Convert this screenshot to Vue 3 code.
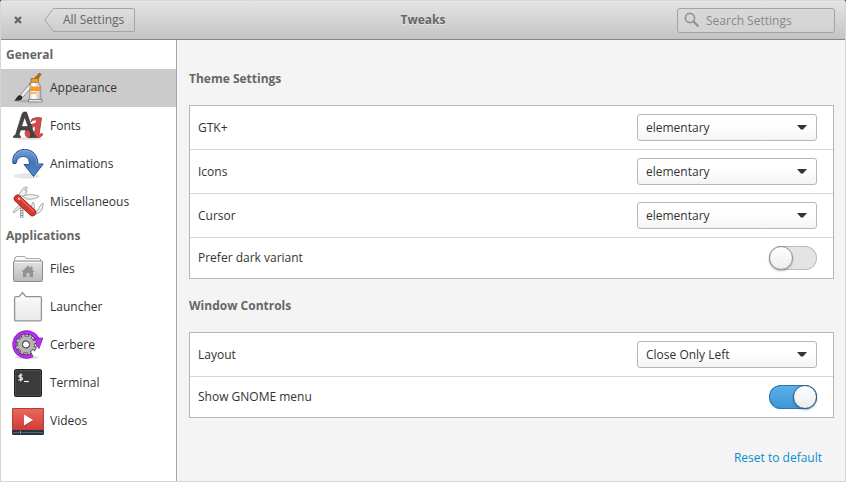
<script setup>
import { reactive, ref } from "vue";

const search = ref("")
const selected = ref("appearance")

const groups = [
  {
    title: "General",
    items: [
      { id: "appearance", label: "Appearance" },
      { id: "fonts", label: "Fonts" },
      { id: "animations", label: "Animations" },
      { id: "misc", label: "Miscellaneous" }
    ]
  },
  {
    title: "Applications",
    items: [
      { id: "files", label: "Files" },
      { id: "launcher", label: "Launcher" },
      { id: "cerbere", label: "Cerbere" },
      { id: "terminal", label: "Terminal" },
      { id: "videos", label: "Videos" }
    ]
  }
]

const defaults = {
  gtk: "elementary",
  icons: "elementary",
  cursor: "elementary",
  dark: false,
  layout: "Close Only Left",
  menu: true
}

const settings = reactive({ ...defaults })

const themes = ["elementary", "Adwaita", "HighContrast"]
const layouts = ["Close Only Left", "Close Only Right", "Minimize Left", "Windows"]

const sections = [
  {
    title: "Theme Settings",
    rows: [
      { key: "gtk", label: "GTK+", options: themes },
      { key: "icons", label: "Icons", options: themes },
      { key: "cursor", label: "Cursor", options: themes },
      { key: "dark", label: "Prefer dark variant" }
    ]
  },
  {
    title: "Window Controls",
    rows: [
      { key: "layout", label: "Layout", options: layouts },
      { key: "menu", label: "Show GNOME menu" }
    ]
  }
]

const reset = () => {
  Object.assign(settings, defaults)
}
</script>

<template>
  <div class="window">
    <header class="titlebar">
      <div class="left">
        <button class="close" aria-label="Close">
          <svg width="8" height="8" viewBox="0 0 8 8">
            <path d="M1 1 7 7M7 1 1 7" stroke="#666" stroke-width="2.3" />
          </svg>
        </button>
        <button class="back">
          <svg width="10" height="24" viewBox="0 0 10 24">
            <defs>
              <linearGradient id="tip" x1="0" y1="0" x2="0" y2="1">
                <stop offset="0" stop-color="#dedede" />
                <stop offset="1" stop-color="#cdcdcd" />
              </linearGradient>
            </defs>
            <path d="M10 .5H9.500L.8 12 9.500 23.500H10" fill="url(#tip)" stroke="#a5a5a5" />
          </svg>
          <span>All Settings</span>
        </button>
      </div>
      <h1>Tweaks</h1>
      <label class="search">
        <svg width="16" height="16" viewBox="0 0 16 16" fill="none" stroke="#929292">
          <circle cx="6" cy="6" r="4.600" stroke-width="1.600" />
          <path d="M9.400 9.400 14.500 14.500" stroke-width="2.200" />
        </svg>
        <input v-model="search" type="text" placeholder="Search Settings" aria-label="Search Settings">
      </label>
    </header>

    <div class="body">
      <nav class="sidebar">
        <template v-for="g in groups" :key="g.title">
          <h2>{{ g.title }}</h2>
          <button
            v-for="item in g.items"
            :key="item.id"
            class="item"
            :class="{ active: selected === item.id }"
            @click="selected = item.id"
          >
            <svg v-if="item.id === 'appearance'" width="32" height="32" viewBox="0 0 32 32">
              <defs>
                <linearGradient id="tube" x1="0" y1="0" x2="1" y2="0">
                  <stop offset="0" stop-color="#d8d8d8" />
                  <stop offset=".4" stop-color="#fff" />
                  <stop offset="1" stop-color="#b5b5b5" />
                </linearGradient>
              </defs>
              <ellipse cx="17" cy="29" rx="14" ry="1.500" fill="#000" opacity=".15" />
              <path d="M27.500 1 29 2.500 25 8 20 13.500 17.500 12 22 7Z" fill="#b8701c" stroke="#7e4a10" stroke-width=".8" />
              <path d="M17 12.500 20 15 10.500 25.500 8 23.500Z" fill="#eee" stroke="#777" stroke-width=".8" />
              <path d="M2 28.500C5 27.500 4.500 23 8 23.200c3 .5 3 3.800.6 4.800-2 .9-4 .8-6.600.5Z" fill="#2b2b2b" />
              <path d="M19 6.500h7.500v4H19Z" fill="#f49a22" stroke="#ad640d" stroke-width=".8" />
              <path d="M19 10.500h7.500l2 3.500.5 14H17.500l.5-14Z" fill="url(#tube)" stroke="#898989" stroke-width=".8" />
              <path d="M18.300 14.500h10v4.500H18.100Z" fill="#f59b24" />
              <path d="M18.200 20h6l.8 2h-7Z" fill="#f8bb60" />
              <path d="M16.500 27.500h13.500v2.500H16.500Z" fill="#e6e6e6" stroke="#777" stroke-width=".8" />
            </svg>

            <svg v-else-if="item.id === 'fonts'" width="32" height="32" viewBox="0 0 32 32">
              <ellipse cx="17" cy="28.500" rx="14" ry="1.500" fill="#000" opacity=".12" />
              <path
                d="M20 9q5-2.500 9.500-1l-2.300 15.500q0 1.500 3 0l.5 1.500q-3 3.500-6.500 2.500-1.500-.6-1.200-3-3.500 4-7 3-4-1.500-2.500-6.500 2-7 10.500-7.500l.4-2.500q.2-2-4-.5L19 12Zm3.500 7q-4 .5-5 4.500-.6 3.500 1.500 3.300 2-.5 3-3.300Z"
                fill="#d94a4e"
                stroke="#a52e32"
                stroke-width=".8"
              />
              <path d="M1.500 27.500V26l2-1L10 4l1.500-2h3L22.500 25l1.500 1v1.500h-6V26l1-1-1.700-5H8.500L7 25l1.500 1v1.500ZM9.500 16.500h6.600L12.700 7Z" fill="#454545" stroke="#2f2f2f" stroke-width=".6" />
            </svg>

            <svg v-else-if="item.id === 'animations'" width="32" height="32" viewBox="0 0 32 32">
              <defs>
                <linearGradient id="swoop" x1="0" y1="0" x2="0" y2="1">
                  <stop offset="0" stop-color="#749fd6" />
                  <stop offset=".5" stop-color="#4475b6" />
                  <stop offset="1" stop-color="#5486c8" />
                </linearGradient>
              </defs>
              <ellipse cx="15" cy="28" rx="13" ry="2.800" fill="#000" opacity=".1" />
              <path d="M1 15.500C-.5 7 5 1.500 12.500 1.500c8.500 0 13 5.500 13.500 14.500h5.200L21.500 28.500 12 16.500H17.500c0-5-2-8-6-8C7.500 8.500 5 11 4 15.500Z" fill="url(#swoop)" stroke="#24528f" stroke-linejoin="round" />
              <path d="M2 12C3 6 7 2.700 12.500 2.700c7.500 0 12 4.800 12.500 14.300h4" fill="none" stroke="#8db4e2" stroke-width=".6" />
            </svg>

            <svg v-else-if="item.id === 'misc'" width="32" height="32" viewBox="0 0 32 32">
              <g fill="#efefef" stroke="#949494" stroke-width=".8" stroke-linejoin="round">
                <path d="M6.500 9 11 2.500 14.500.8l.8 1.800-2.500 1.400L15 5l-2.500 6Z" />
                <path d="M11 10c5-2 12-2 16 .5-3 2.700-9 3-13 2.500Z" />
                <path d="M7 19 1 26l1 .8L9 21Z" />
                <path d="M8.500 19.500h2.500V32H8.500Z" />
                <path d="M19 24c1-4 .5-6 2-8l1 2c1 3 0 6-1 8Z" />
                <path d="M23 26c4-1 3-4 5-6l2.500-3 .8.700-1 5c-1 3-4 4.500-6 5Z" />
              </g>
              <path d="M8.500 22h2.500M8.500 24.500h2.500M8.500 27h2.500M8.500 29.500h2.500" stroke="#8a8a8a" />
              <path d="M5.500 12.500 20.500 26.500" stroke="#a01c17" stroke-width="7.400" stroke-linecap="round" />
              <path d="M5.500 12.500 20.500 26.500" stroke="#d63a31" stroke-width="6" stroke-linecap="round" />
              <path d="M6.500 11 21.500 25" stroke="#e8665b" stroke-width="1.200" stroke-linecap="round" />
              <path d="m6 12 1.600 1.600M7.600 12 6 13.600" stroke="#fff" stroke-width="1" />
            </svg>

            <svg v-else-if="item.id === 'files'" width="32" height="32" viewBox="0 0 32 32">
              <defs>
                <linearGradient id="folder" x1="0" y1="0" x2="0" y2="1">
                  <stop offset="0" stop-color="#e2e2e2" />
                  <stop offset="1" stop-color="#bababa" />
                </linearGradient>
              </defs>
              <path d="M2.500 9V5.500h1V4l.5-.5h9l.5.500V5.500h14.500l.5.500V9Z" fill="#fafafa" stroke="#aaa" />
              <path d="M1.500 9q0-1 1-1h27q1 0 1 1v18.500q0 1-1 1h-27q-1 0-1-1Z" fill="url(#folder)" stroke="#8d8d8d" />
              <path d="M2.500 9.500h27" stroke="#f6f6f6" />
              <path d="m16 12.500 2.500 2.500v-1.500h2V17l2 2H21v5h-3.500v-4h-3v4H11v-5H9.500Z" fill="#929292" />
            </svg>

            <svg v-else-if="item.id === 'launcher'" width="32" height="32" viewBox="0 0 32 32">
              <defs>
                <linearGradient id="paper" x1="0" y1="0" x2="0" y2="1">
                  <stop offset="0" stop-color="#fdfdfd" />
                  <stop offset="1" stop-color="#e8e8e8" />
                </linearGradient>
              </defs>
              <path d="M2.600 7q0-1.400 1.400-1.400h3L10.500 1.500 14 5.600h14q1.400 0 1.400 1.400v21.500q0 1.400-1.400 1.400H4q-1.400 0-1.400-1.400Z" fill="url(#paper)" stroke="#929292" stroke-width="1.300" />
            </svg>

            <svg v-else-if="item.id === 'cerbere'" width="32" height="32" viewBox="0 0 32 32">
              <ellipse cx="15" cy="28.500" rx="12" ry="1.500" fill="#000" opacity=".15" />
              <g fill="none">
                <path d="M20.500 25.900A12 12 0 1 1 26 12" stroke="#8416bd" stroke-width="4.400" />
                <path d="M20.500 25.900A12 12 0 1 1 26 12" stroke="#ba2df2" stroke-width="3" />
              </g>
              <path d="M20 10.500 24 9.500 30.800 9 27 19.500Z" fill="#ba2df2" stroke="#8416bd" stroke-width=".8" />
              <g fill="none" transform="rotate(11 14 15.500)">
                <circle cx="14" cy="15.500" r="8.800" stroke="#4a4a4a" stroke-width="4.600" stroke-dasharray="4.200 2.711" />
                <circle cx="14" cy="15.500" r="6" stroke="#4a4a4a" stroke-width="5.800" />
                <circle cx="14" cy="15.500" r="8.500" stroke="#b4b4b4" stroke-width="3.400" stroke-dasharray="2.600 4.076" stroke-dashoffset="-.8" />
                <circle cx="14" cy="15.500" r="6" stroke="#b4b4b4" stroke-width="4.200" />
              </g>
              <circle cx="14" cy="15.500" r="3.500" fill="#fff" stroke="#4a4a4a" />
            </svg>

            <svg v-else-if="item.id === 'terminal'" width="32" height="32" viewBox="0 0 32 32">
              <rect x="2.500" y="2.500" width="27" height="27" rx="1.500" fill="#3b3b3b" stroke="#202020" />
              <path d="M3.500 3.500h25v25h-25Z" fill="none" stroke="#555" stroke-width=".7" />
              <path d="M10.500 8H8.500q-1.500 0-1.500 1.200T8.500 10.500h.5q1.500 0 1.500 1.200T9 12.900H6.500M8.800 6.500v8" fill="none" stroke="#f4f4f4" stroke-width="1.200" />
              <path d="M12 14.500h5" stroke="#f4f4f4" stroke-width="1.200" />
            </svg>

            <svg v-else width="32" height="32" viewBox="0 0 32 32">
              <defs>
                <linearGradient id="video" x1="0" y1="0" x2="0" y2="1">
                  <stop offset="0" stop-color="#e9695c" />
                  <stop offset="1" stop-color="#cf3c39" />
                </linearGradient>
              </defs>
              <rect x="0" y="3" width="32" height="27" rx="1.500" fill="#273441" />
              <path d="M0 25V4.500Q0 3 1.500 3h29Q32 3 32 4.500V25Z" fill="url(#video)" />
              <path d="M.5 25V4.500q0-1 1-1h29q1 0 1 1V25" fill="none" stroke="#b63c38" />
              <path d="M1 27.500h6.500M9.500 27.500H31" stroke="#586675" />
              <path d="M8.500 26v3" stroke="#8b97a3" />
              <path d="M12 10.500v11l9-5.500Z" fill="#942a28" opacity=".5" />
              <path d="M12 9.500v11l9-5.500Z" fill="#fff" />
            </svg>
            <span>{{ item.label }}</span>
          </button>
        </template>
      </nav>

      <main class="content">
        <section v-for="s in sections" :key="s.title">
          <h2>{{ s.title }}</h2>
          <div class="card">
            <div v-for="row in s.rows" :key="row.key" class="row">
              <label :for="row.key">{{ row.label }}</label>
              <div v-if="row.options" class="combo">
                <select :id="row.key" v-model="settings[row.key]">
                  <option v-for="o in row.options" :key="o">{{ o }}</option>
                </select>
                <svg width="10" height="5" viewBox="0 0 10 5">
                  <path d="M0 0h10L6 4.500H4Z" fill="#333" />
                </svg>
              </div>
              <input v-else :id="row.key" v-model="settings[row.key]" type="checkbox" class="switch">
            </div>
          </div>
        </section>
        <a href="#" class="reset" @click.prevent="reset">Reset to default</a>
      </main>
    </div>
  </div>
</template>

<style>
  body {
    background: #3c3c48;
  }
</style>

<style scoped>
  .window {
    min-height: 100vh;
    box-sizing: border-box;
    display: flex;
    flex-direction: column;
    border: 1px solid #d5d5d5;
    border-top: none;
    border-radius: 3px 3px 0 0;
    background: #f4f4f4;
    overflow: hidden;
    color: #333;
    font-family: "Open Sans", "Noto Sans", sans-serif;
    font-size: 12px;
    line-height: 18px;
  }

  button,
  input,
  select {
    font: inherit;
    color: inherit;
    margin: 0;
  }

  h1,
  h2 {
    margin: 0;
    font-size: 12px;
    font-weight: bold;
    color: #666;
  }

  .titlebar {
    display: grid;
    grid-template-columns: 1fr auto 1fr;
    align-items: center;
    height: 38px;
    padding: 0 10px;
    background: linear-gradient(#e4e4e4, #c4c4c4);
    border-top: 1px solid #d6d6d6;
    border-bottom: 1px solid #868686;
    text-shadow: 0 1px #e8e8e8;
  }

  .left {
    display: flex;
    align-items: center;
    gap: 19px;
  }

  .close {
    display: flex;
    padding: 3px;
    border: none;
    background: none;
  }

  .back {
    display: flex;
    height: 24px;
    padding: 0;
    border: none;
    background: none;
    color: #666;
  }

  .back span {
    box-sizing: border-box;
    height: 24px;
    padding: 2px 10px 0 9px;
    border: 1px solid #a5a5a5;
    border-left: none;
    border-radius: 0 2px 2px 0;
    background: linear-gradient(#dedede, #cdcdcd);
  }

  .search {
    justify-self: end;
    box-sizing: border-box;
    display: flex;
    align-items: center;
    gap: 6px;
    width: 158px;
    height: 25px;
    padding: 0 6px;
    border: 1px solid #a2a2a2;
    border-radius: 3px;
    background: linear-gradient(#d9d9d9, #d2d2d2);
  }

  .search svg {
    flex: none;
  }

  .search input {
    flex: 1;
    min-width: 0;
    padding: 1px 0 0;
    border: none;
    outline: none;
    background: none;
  }

  .search input::placeholder {
    color: #888;
  }

  .body {
    flex: 1;
    display: flex;
  }

  .sidebar {
    flex: none;
    width: 175px;
    border-right: 1px solid #a6a6a6;
    background: #fff;
  }

  .sidebar h2 {
    padding: 6px 5px 5px;
  }

  .item {
    display: flex;
    align-items: center;
    gap: 6px;
    width: 100%;
    height: 38px;
    padding: 0 11px;
    border: none;
    background: none;
    text-align: left;
  }

  .item.active {
    background: #cbcbcb;
  }

  .content {
    flex: 1;
    display: flex;
    flex-direction: column;
    padding: 12px 11px 12px 12px;
  }

  .content h2 {
    padding: 18px 0 17px;
  }

  .card {
    border: 1px solid #b5b5b5;
    background: #fff;
  }

  .row {
    display: flex;
    align-items: center;
    justify-content: space-between;
    padding: 8px 16px 8px 8px;
  }

  .row + .row {
    border-top: 1px solid #d6d6d6;
  }

  .combo {
    display: grid;
    align-items: center;
  }

  .combo select,
  .combo svg {
    grid-area: 1 / 1;
  }

  .combo svg {
    justify-self: end;
    margin-right: 10px;
    pointer-events: none;
  }

  .combo select {
    appearance: none;
    width: 180px;
    height: 27px;
    padding: 0 26px 0 8px;
    border: 1px solid #b7b7b7;
    border-radius: 3px;
    background: linear-gradient(#fff 40%, #f4f4f4);
  }

  .switch {
    appearance: none;
    width: 48px;
    height: 24px;
    border-radius: 12px;
    background: #e4e4e4;
    box-shadow: inset 0 0 0 1px #bdbdbd;
  }

  .switch::before {
    content: "";
    display: block;
    box-sizing: border-box;
    width: 24px;
    height: 24px;
    border: 1px solid #8d8d8d;
    border-radius: 50%;
    background: linear-gradient(#fff, #ececec);
    box-shadow: 0 1px 2px rgba(0, 0, 0, 0.3);
  }

  .switch:checked {
    background: linear-gradient(#5cb0ea, #3e96d6);
    box-shadow: inset 0 0 0 1px #2f74a8;
  }

  .switch:checked::before {
    margin-left: auto;
    border-color: #2c5f88;
  }

  .reset {
    align-self: flex-end;
    margin: 31px 12px 0 0;
    color: #0d8dd0;
    text-decoration: none;
  }
</style>
